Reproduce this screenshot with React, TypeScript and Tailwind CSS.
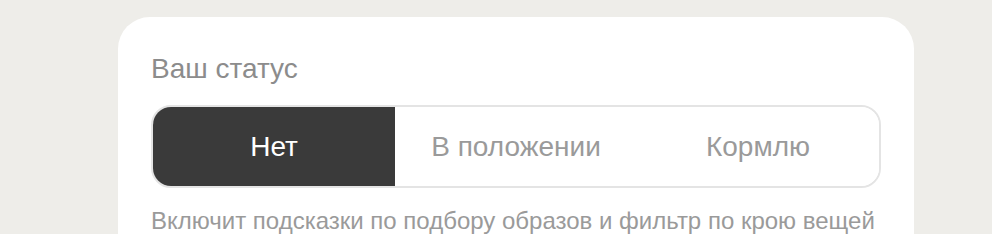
import { useState } from 'react';

const options = ['Нет', 'В положении', 'Кормлю'];

export default function App() {
  const [status, setStatus] = useState('Нет');

  return (
    <div className="min-h-[234px] bg-[#eeede9] pt-[17px] font-['Liberation_Sans',Arial,sans-serif]">
      <div className="ml-[118px] w-[796px] rounded-t-[32px] bg-white px-[33px] pt-[36px] pb-6">
        <h2 className="text-[28px] leading-[32px] font-normal text-[#8c8c8c]">Ваш статус</h2>
        <div className="mt-[20px] flex h-[83px] overflow-hidden rounded-[20px] border-2 border-[#e4e4e4]">
          {options.map((option) => {
            const active = option === status;
            return (
              <button
                key={option}
                type="button"
                onClick={() => setStatus(option)}
                className={
                  active
                    ? 'flex-1 bg-[#3a3a3a] text-[28px] text-white'
                    : 'flex-1 bg-white text-[28px] text-[#9a9a9a]'
                }
              >
                {option}
              </button>
            );
          })}
        </div>
        <p className="mt-[19px] text-[24px] leading-[28px] text-[#9a9a9a]">
          Включит подсказки по подбору образов и фильтр по крою вещей
        </p>
      </div>
    </div>
  );
}
